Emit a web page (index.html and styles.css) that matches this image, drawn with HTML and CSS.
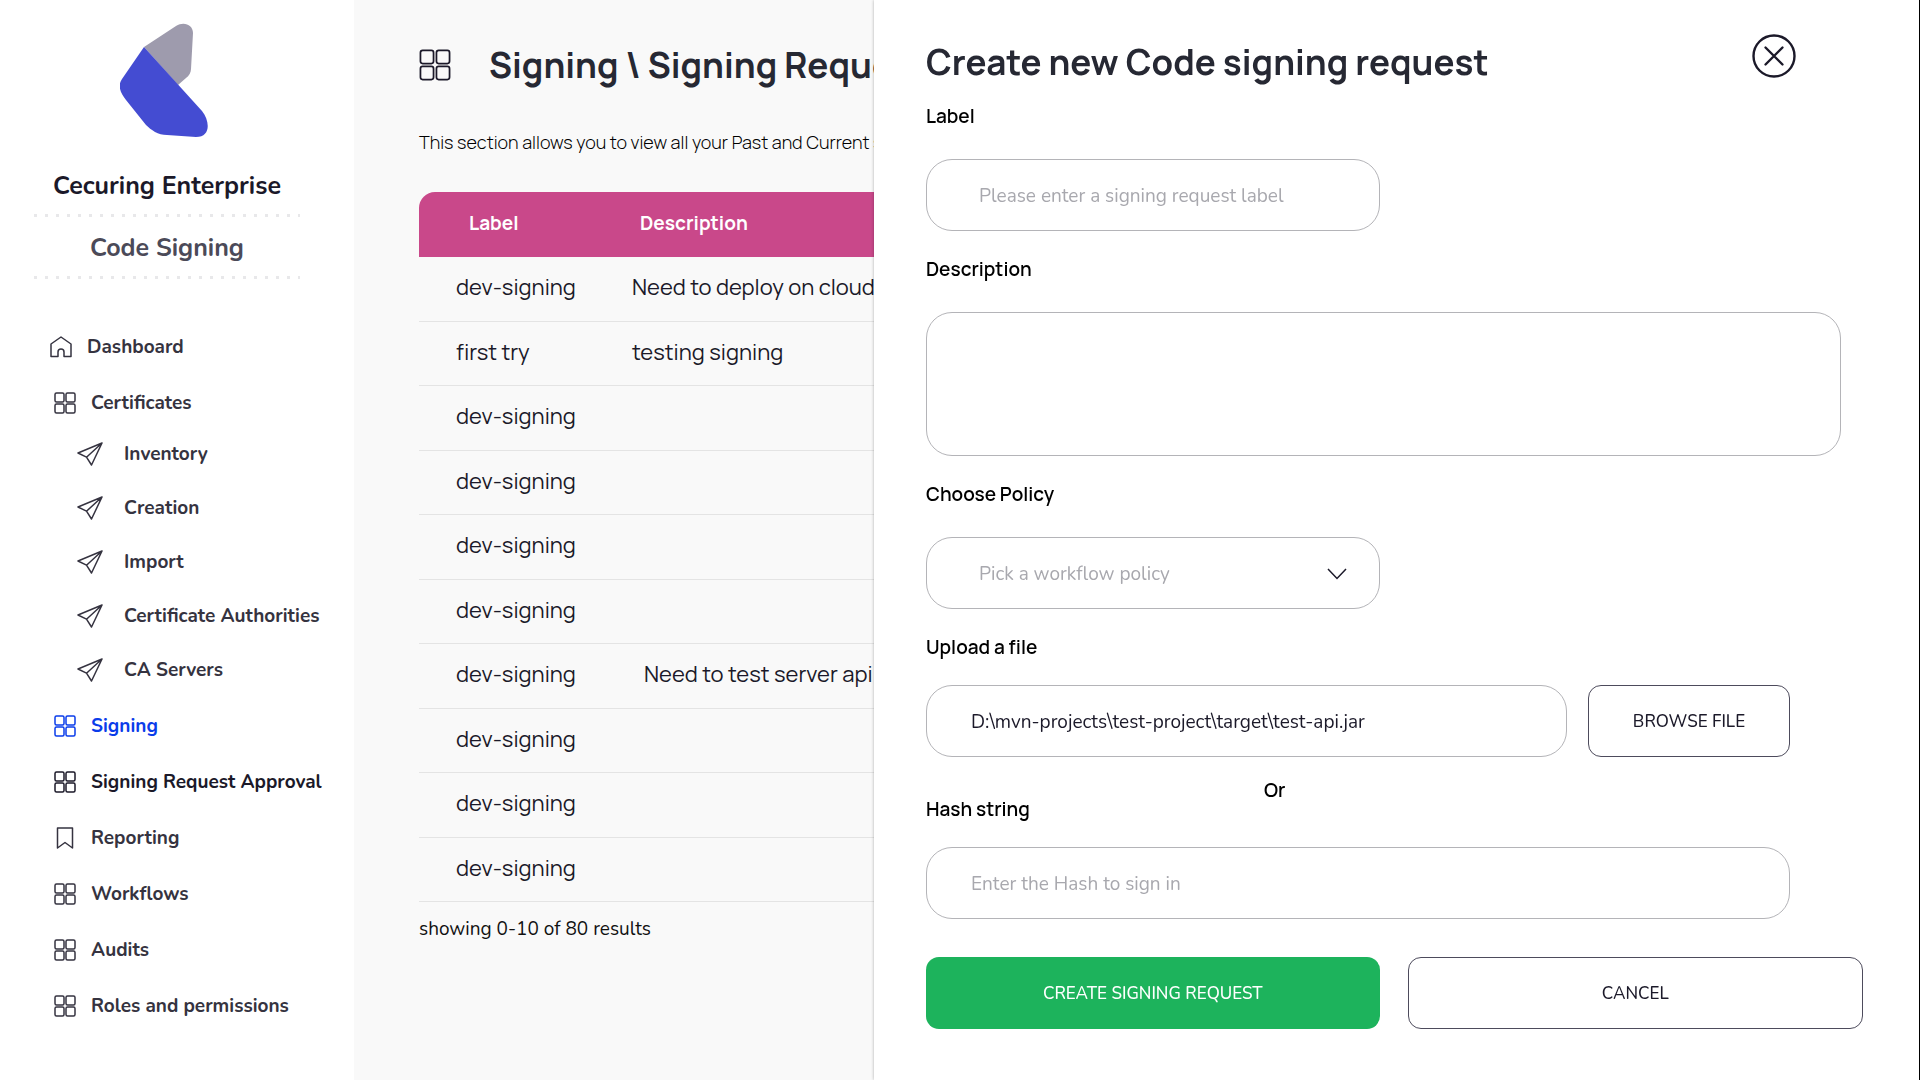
FILE: index.html
```
<!DOCTYPE html>
<html lang="en">
<head>
<meta charset="utf-8">
<title>Code Signing – Signing Requests</title>
<link rel="stylesheet" href="styles.css">
</head>
<body>
<svg class="sprite" aria-hidden="true">
  <symbol id="icon-grid" viewBox="0 0 22 22">
    <rect x="1" y="1" width="9" height="9" rx="1.500"/><rect x="12" y="1" width="9" height="9" rx="1.500"/>
    <rect x="1" y="12" width="9" height="9" rx="1.500"/><rect x="12" y="12" width="9" height="9" rx="1.500"/>
  </symbol>
  <symbol id="icon-home" viewBox="0 0 22 22">
    <path d="M1 8 11 1l10 7v12.500h-7V16a3 3 0 0 0-6 0v4.500H1z"/>
  </symbol>
  <symbol id="icon-send" viewBox="0 0 26 24">
    <path d="M25 1 1 11l8.500 4.200L14.500 23zM9.500 15.200 25 1"/>
  </symbol>
  <symbol id="icon-bookmark" viewBox="0 0 22 22">
    <path d="M3.500 1h15v20L11 15.500 3.500 21z"/>
  </symbol>
</svg>

<div class="app">
  <aside class="sidebar">
    <div class="brand">
      <svg class="brand-logo" viewBox="0 0 88 114" aria-hidden="true">
        <path fill="#9e9bad" d="M24 24 56 3C64-2 73 2 73 10L71 46C71 49 69 53 66 55L58 62Z"/>
        <path fill="#444cd2" d="M24 24 82 88C90 98 91 114 76 114L47 112C38 112 31 107 26 102L6 77C1 71-3 63 2 56Z"/>
      </svg>
      <p class="brand-name">Cecuring Enterprise</p>
      <p class="brand-product">Code Signing</p>
    </div>
    <nav class="nav" aria-label="Main">
      <a class="nav-link nav-link-home" href="#"><svg class="icon"><use href="#icon-home"/></svg>Dashboard</a>
      <div class="nav-group">
        <a class="nav-link" href="#"><svg class="icon"><use href="#icon-grid"/></svg>Certificates</a>
        <div class="nav-sub">
          <a class="nav-link" href="#"><svg class="icon icon-send"><use href="#icon-send"/></svg>Inventory</a>
          <a class="nav-link" href="#"><svg class="icon icon-send"><use href="#icon-send"/></svg>Creation</a>
          <a class="nav-link" href="#"><svg class="icon icon-send"><use href="#icon-send"/></svg>Import</a>
          <a class="nav-link" href="#"><svg class="icon icon-send"><use href="#icon-send"/></svg>Certificate Authorities</a>
          <a class="nav-link" href="#"><svg class="icon icon-send"><use href="#icon-send"/></svg>CA Servers</a>
        </div>
      </div>
      <a class="nav-link nav-link-active" href="#"><svg class="icon"><use href="#icon-grid"/></svg>Signing</a>
      <a class="nav-link nav-link-strong" href="#"><svg class="icon"><use href="#icon-grid"/></svg>Signing Request Approval</a>
      <a class="nav-link" href="#"><svg class="icon"><use href="#icon-bookmark"/></svg>Reporting</a>
      <a class="nav-link" href="#"><svg class="icon"><use href="#icon-grid"/></svg>Workflows</a>
      <a class="nav-link" href="#"><svg class="icon"><use href="#icon-grid"/></svg>Audits</a>
      <a class="nav-link" href="#"><svg class="icon"><use href="#icon-grid"/></svg>Roles and permissions</a>
    </nav>
  </aside>

  <main class="content">
    <header class="content-header">
      <svg class="icon icon-page"><use href="#icon-grid"/></svg>
      <h1 class="page-title">Signing \ Signing Requests</h1>
    </header>
    <p class="intro">This section allows you to view all your Past and Current signing requests</p>
    <table class="requests">
      <thead><tr><th scope="col">Label</th><th scope="col">Description</th></tr></thead>
      <tbody>
        <tr><td>dev-signing</td><td>Need to deploy on cloud</td></tr>
        <tr><td>first try</td><td>testing signing</td></tr>
        <tr><td>dev-signing</td><td></td></tr>
        <tr><td>dev-signing</td><td></td></tr>
        <tr><td>dev-signing</td><td></td></tr>
        <tr><td>dev-signing</td><td></td></tr>
        <tr><td>dev-signing</td><td class="cell-indent">Need to test server api</td></tr>
        <tr><td>dev-signing</td><td></td></tr>
        <tr><td>dev-signing</td><td></td></tr>
        <tr><td>dev-signing</td><td></td></tr>
      </tbody>
    </table>
    <p class="result-count">showing 0-10 of 80 results</p>
  </main>
</div>

<section class="panel" role="dialog" aria-labelledby="panel-title">
  <header class="panel-header">
    <h2 class="panel-title" id="panel-title">Create new Code signing request</h2>
    <button class="close" type="button" aria-label="Close">
      <svg viewBox="0 0 44 44" aria-hidden="true"><circle cx="22" cy="22" r="20.500"/><path d="m13.500 13.500 17 17M30.500 13.500l-17 17"/></svg>
    </button>
  </header>
  <form class="form">
    <div class="field">
      <label for="label">Label</label>
      <input class="control control-short" id="label" type="text" placeholder="Please enter a signing request label">
    </div>
    <div class="field">
      <label for="description">Description</label>
      <textarea class="control control-area" id="description"></textarea>
    </div>
    <div class="field">
      <label for="policy">Choose Policy</label>
      <div class="select">
        <select class="control control-short" id="policy"><option>Pick a workflow policy</option></select>
        <svg class="select-arrow" viewBox="0 0 20 12" aria-hidden="true"><path d="m1 1 9 9.500L19 1"/></svg>
      </div>
    </div>
    <div class="field field-file">
      <label for="file">Upload a file</label>
      <div class="file-row">
        <input class="control control-inset" id="file" type="text" value="D:\mvn-projects\test-project\target\test-api.jar">
        <button class="button button-outline button-browse" type="button">BROWSE FILE</button>
      </div>
    </div>
    <p class="or">Or</p>
    <div class="field field-hash">
      <label for="hash">Hash string</label>
      <input class="control control-inset" id="hash" type="text" placeholder="Enter the Hash to sign in">
    </div>
    <div class="actions">
      <button class="button button-primary" type="submit">CREATE SIGNING REQUEST</button>
      <button class="button button-outline" type="button">CANCEL</button>
    </div>
  </form>
</section>
</body>
</html>
```
FILE: styles.css
```
:root {
  --font-ui: "Nunito", "Open Sans", sans-serif;
  --font-display: "Manrope", "Inter", sans-serif;
  --ink: #1b1929;
  --ink-soft: #353340;
  --line: #e4e4e4;
  --control-line: #b4b4b8;
}

* {
  box-sizing: border-box;
}

body {
  margin: 0;
  background: #f9f9f9;
  color: var(--ink);
  font-family: var(--font-ui);
  font-size: 19px;
  overflow: hidden;
}

h1, h2, p {
  margin: 0;
}

button, input, select, textarea {
  font: inherit;
  color: inherit;
}

.sprite {
  display: none;
}

.app {
  display: flex;
  min-height: 100vh;
}

/* Sidebar */

.sidebar {
  flex: 0 0 354px;
  background: #fff;
}

.brand {
  display: flex;
  flex-direction: column;
  align-items: center;
  margin: 0 54px 0 34px;
  padding-top: 23px;
  text-align: center;
}

.brand-logo {
  width: 88px;
  height: 114px;
  margin-right: 6px;
}

.brand-name,
.brand-product {
  width: 100%;
  background: repeating-linear-gradient(90deg, #e8e8ea 0 3px, transparent 3px 11px) bottom / 100% 3px no-repeat;
  font-size: 25px;
  font-weight: 700;
  line-height: 32px;
}

.brand-name {
  margin-top: 33px;
  padding-bottom: 15px;
}

.brand-product {
  padding: 15px 0;
  color: #4b4a58;
}

.nav {
  display: flex;
  flex-direction: column;
  gap: 8px;
  padding: 44px 0 40px 54px;
}

.nav-link {
  display: flex;
  align-items: center;
  gap: 15px;
  height: 48px;
  color: var(--ink-soft);
  font-weight: 700;
  text-decoration: none;
  white-space: nowrap;
}

.nav-link-home {
  margin-left: -4px;
}

.nav-link-strong {
  color: var(--ink);
}

.nav-link-active {
  color: #0a3cea;
}

.nav-group {
  display: flex;
  flex-direction: column;
  gap: 3px;
}

.nav-sub {
  display: flex;
  flex-direction: column;
  gap: 6px;
  padding-left: 23px;
}

.nav-sub .nav-link {
  gap: 21px;
}

.icon {
  flex: none;
  width: 22px;
  height: 22px;
  fill: none;
  stroke: currentColor;
  stroke-width: 1.5;
  stroke-linejoin: round;
}

.icon-send {
  width: 26px;
  height: 24px;
}

/* Signing requests */

.content {
  flex: 1;
  min-width: 0;
  padding: 37px 64px 40px 65px;
}

.content-header {
  display: flex;
  align-items: center;
  gap: 38px;
}

.icon-page {
  width: 32px;
  height: 32px;
  stroke-width: 1.2;
}

.page-title,
.panel-title {
  color: #262833;
  font-family: var(--font-display);
  font-size: 35px;
  font-weight: 700;
  line-height: 56px;
  white-space: nowrap;
}

.intro {
  margin-top: 37px;
  color: #000;
  font-family: var(--font-display);
  font-size: 18px;
  font-weight: 300;
  line-height: 24px;
}

.requests {
  width: 100%;
  margin-top: 38px;
  border-collapse: separate;
  border-spacing: 0;
  font-family: var(--font-display);
  font-size: 22px;
  table-layout: fixed;
}

.requests th {
  height: 65px;
  padding: 0 0 4px 50px;
  background: #c9488a;
  color: #fff;
  font-size: 19px;
  font-weight: 700;
  text-align: left;
}

.requests th:first-child {
  width: 213px;
  border-top-left-radius: 16px;
}

.requests th:last-child {
  padding-left: 8px;
  border-top-right-radius: 16px;
}

.requests td {
  height: 65px;
  padding: 0 0 4px;
  border-bottom: 1px solid var(--line);
}

.requests tr:nth-child(even) td {
  height: 64px;
}

.requests td:first-child {
  padding-left: 37px;
}

.requests .cell-indent {
  padding-left: 12px;
}

.result-count {
  margin-top: 15px;
  color: #111;
  line-height: 24px;
}

/* Slide-over panel */

.panel {
  position: fixed;
  inset: 0 0 0 874px;
  padding: 34px 56px 40px 52px;
  overflow: auto;
  border-right: 1px solid #000;
  background: #fff;
  box-shadow: 0 0 3px rgba(0, 0, 0, 0.3);
}

.panel-header {
  display: flex;
  align-items: flex-start;
  justify-content: space-between;
  padding-right: 67px;
}

.close {
  width: 44px;
  height: 44px;
  padding: 0;
  border: 0;
  background: none;
  cursor: pointer;
}

.close svg {
  display: block;
  fill: none;
  stroke: var(--ink);
  stroke-width: 2.4;
  stroke-linecap: round;
}

.form {
  display: flex;
  flex-direction: column;
  gap: 28px;
  margin-top: 16px;
}

.field {
  display: flex;
  flex-direction: column;
  gap: 33px;
}

.field label,
.or {
  color: #000;
  font-family: var(--font-display);
  font-size: 19px;
  font-weight: 600;
  line-height: 20px;
}

.field-file,
.field-hash {
  gap: 28px;
  margin-right: 73px;
}

.control {
  display: block;
  width: 100%;
  height: 72px;
  margin: 0;
  padding: 2px 52px 0;
  border: 1px solid var(--control-line);
  border-radius: 26px;
  background: #fff;
  outline: 0;
}

.control::placeholder {
  color: #a8a8ae;
  opacity: 1;
}

.control-short {
  max-width: 454px;
}

.control-inset {
  padding: 2px 44px 0;
}

.control-area {
  max-width: 915px;
  height: 144px;
  padding: 24px 52px;
  resize: none;
}

.select {
  position: relative;
  max-width: 454px;
}

.select select {
  appearance: none;
  color: #a8a8ae;
}

.select-arrow {
  position: absolute;
  top: 31px;
  right: 33px;
  width: 20px;
  height: 12px;
  fill: none;
  stroke: var(--ink);
  stroke-width: 1.5;
  pointer-events: none;
}

.file-row {
  display: flex;
  gap: 21px;
}

.button {
  flex: 1;
  height: 72px;
  padding: 0;
  border-radius: 13px;
  font-size: 17px;
  font-weight: 500;
  cursor: pointer;
}

.button-outline {
  border: 1px solid #4d4b5c;
  background: #fff;
}

.button-primary {
  border: 0;
  background: #1db35c;
  color: #fff;
}

.button-browse {
  flex: 0 0 202px;
}

.or {
  margin: -5px 0 -29px;
  padding-left: 338px;
}

.actions {
  display: flex;
  gap: 28px;
  margin-top: 10px;
}
```
